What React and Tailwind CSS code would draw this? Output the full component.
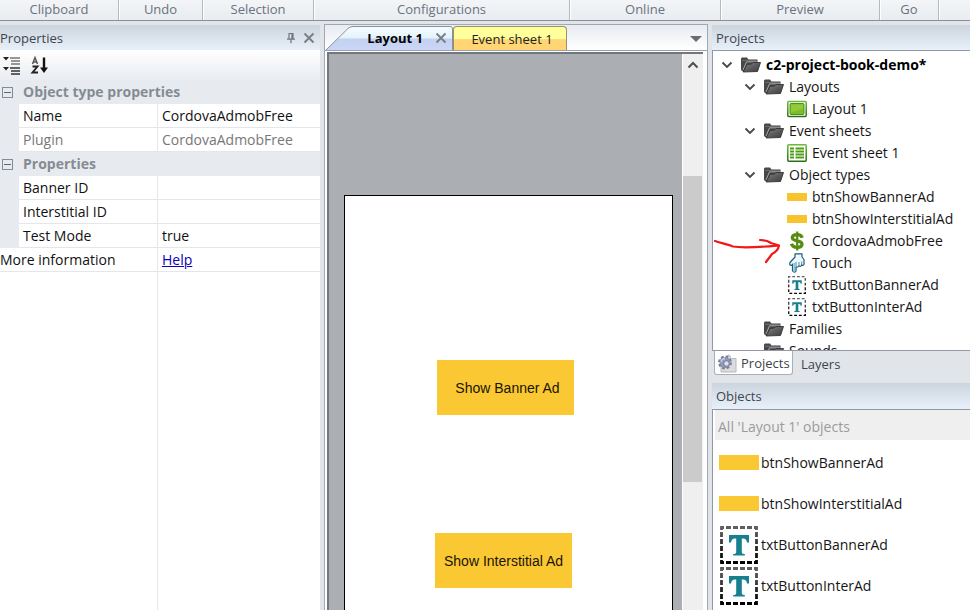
import React from "react";

const ribbonGroups = [
  { label: "Clipboard", width: "w-[119px]" },
  { label: "Undo", width: "w-[84px]" },
  { label: "Selection", width: "w-[111px]" },
  { label: "Configurations", width: "w-[256px]" },
  { label: "Online", width: "w-[151px]" },
  { label: "Preview", width: "w-[159px]" },
  { label: "Go", width: "w-[59px]" },
];

function Ribbon() {
  return (
    <header className="flex h-[21px] shrink-0 border-b border-[#8b9097] bg-linear-to-b from-[#f3f5f7] to-[#e9ecf0] text-[13px] text-[#6a7280]">
      {ribbonGroups.map((g) => (
        <div key={g.label} className={`${g.width} h-5 shrink-0 border-r border-[#b4b9c1] text-center leading-[18px] shadow-[1px_0_0_#ffffff]`}>
          {g.label}
        </div>
      ))}
    </header>
  );
}

function PanelTitle({ children, className }) {
  return (
    <div className={`flex shrink-0 items-center bg-linear-to-b from-[#ccd4dd] to-[#e8f0f9] text-[13px] text-[#3f4650] ${className}`}>
      {children}
    </div>
  );
}

function PinIcon() {
  return (
    <svg className="h-3 w-3" viewBox="0 0 12 12" fill="none" stroke="#6f757d" strokeWidth="1.2">
      <path d="M3.5 1.5h5M4 1.5v5.5M8 1.5v5.5M7 2v5M2 7.2h8M6 7.2v4" />
    </svg>
  );
}

function CloseIcon() {
  return (
    <svg className="h-3 w-3" viewBox="0 0 12 12" fill="none" stroke="#7a7f86" strokeWidth="1.9">
      <path d="M1.5 1.5l9 9M10.5 1.5l-9 9" />
    </svg>
  );
}

function CategorizedIcon() {
  return (
    <svg className="h-5 w-5" viewBox="0 0 20 20">
      <path d="M1 2h6L4 5.5zM1 12h6l-3 3.5z" fill="#222" />
      <path d="M8 3h10M9 6h9M9 9h9" stroke="#777" strokeWidth="1.5" />
      <path d="M8 13h10M9 16h9M9 19h9" stroke="#333" strokeWidth="1.7" />
    </svg>
  );
}

function SortIcon() {
  return (
    <svg className="h-5 w-5" viewBox="0 0 20 20" fill="none">
      <path d="M2.500 9L5 2.500 7.500 9M3.200 7h3.600" stroke="#555" strokeWidth="1.500" />
      <path d="M2.500 11.500h5l-5 6h5.500" stroke="#222" strokeWidth="1.900" />
      <path d="M14 2.500v11.500" stroke="#111" strokeWidth="2.400" />
      <path d="M10 12.500h8L14 18z" fill="#111" />
    </svg>
  );
}

function CategoryRow({ children }) {
  return (
    <tr className="h-6 bg-[#e7ebef]">
      <td className="p-0 pl-[2px]">
        <button aria-label={`Collapse ${children}`} className="flex h-[11px] w-[11px] items-center justify-center border border-[#868c95]">
          <span className="h-px w-[7px] bg-[#60666e]" />
        </button>
      </td>
      <th colSpan={2} className="p-0 pl-1 text-left font-bold text-[#868b93]">{children}</th>
    </tr>
  );
}

function PropertyRow({ id, label, children, muted }) {
  return (
    <tr className={muted ? "h-6 text-[#777777]" : "h-6 text-[#111111]"}>
      <td className="bg-[#e7ebef] p-0" />
      <td className="border-r border-b border-[#e3e6eb] p-0 pl-1">
        <label htmlFor={id}>{label}</label>
      </td>
      <td className="border-b border-[#e3e6eb] p-0 pl-1">{children}</td>
    </tr>
  );
}

function PropertiesPanel() {
  const field = "block h-[23px] w-full appearance-none bg-transparent p-0 outline-none";
  return (
    <section className="flex w-80 shrink-0 flex-col bg-white">
      <PanelTitle className="h-[25px]">
        <h2 className="flex-1">Properties</h2>
        <button aria-label="Pin" className="mr-[6px]"><PinIcon /></button>
        <button aria-label="Close" className="mr-[5px]"><CloseIcon /></button>
      </PanelTitle>
      <div className="flex h-[30px] shrink-0 items-center gap-2 bg-linear-to-b from-white to-[#e9ecf1] pl-[2px]">
        <button aria-label="Categorized"><CategorizedIcon /></button>
        <button aria-label="Sort alphabetically"><SortIcon /></button>
      </div>
      <table className="w-full table-fixed border-separate border-spacing-0">
        <colgroup>
          <col className="w-[19px]" />
          <col className="w-[139px]" />
          <col />
        </colgroup>
        <tbody>
          <CategoryRow>Object type properties</CategoryRow>
          <PropertyRow id="name" label="Name">
            <input id="name" className={field} defaultValue="CordovaAdmobFree" />
          </PropertyRow>
          <PropertyRow id="plugin" label="Plugin" muted>
            <input id="plugin" className={field} readOnly value="CordovaAdmobFree" />
          </PropertyRow>
          <CategoryRow>Properties</CategoryRow>
          <PropertyRow id="banner" label="Banner ID">
            <input id="banner" className={field} />
          </PropertyRow>
          <PropertyRow id="interstitial" label="Interstitial ID">
            <input id="interstitial" className={field} />
          </PropertyRow>
          <PropertyRow id="test" label="Test Mode">
            <select id="test" className={field} defaultValue="true">
              <option>true</option>
              <option>false</option>
            </select>
          </PropertyRow>
          <tr className="h-6 text-[#111111]">
            <td colSpan={2} className="border-r border-b border-[#e3e6eb] p-0">More information</td>
            <td className="border-b border-[#e3e6eb] p-0 pl-1">
              <a href="#help" className="text-[#0d00b8] underline">Help</a>
            </td>
          </tr>
        </tbody>
      </table>
      <div className="w-[158px] flex-1 border-r border-[#e3e6eb]" />
    </section>
  );
}

function EditorTabs() {
  return (
    <div className="flex h-[26px] shrink-0 items-end border-b border-[#9ba1ab] bg-linear-to-b from-[#e8ebf0] to-white text-[13px]">
      <div className="relative h-6 w-32 shrink-0">
        <svg className="absolute inset-0 h-6 w-32" viewBox="0 0 128 24">
          <defs>
            <linearGradient id="tabFill" x1="0" y1="0" x2="0" y2="1">
              <stop offset="0" stopColor="#f6fcff" />
              <stop offset="0.5" stopColor="#e3f2fa" />
              <stop offset="0.52" stopColor="#c3d1f1" />
              <stop offset="1" stopColor="#cbd6f5" />
            </linearGradient>
          </defs>
          <path d="M1 24L23 2.500Q25 .5 28 .5H125.500Q127.500 .5 127.500 3V24" fill="url(#tabFill)" stroke="#8990a0" />
        </svg>
        <div className="relative flex h-6 items-center justify-end pr-[6px]">
          <button className="mr-3 font-bold text-black">Layout 1</button>
          <button aria-label="Close Layout 1"><CloseIcon /></button>
        </div>
      </div>
      <button className="h-6 w-[114px] shrink-0 rounded-t-[4px] border border-b-0 border-[#99916e] bg-linear-to-b from-[#ffff9c] from-50% to-[#ffd673] to-55% pl-1 text-[#222222]">
        Event sheet 1
      </button>
      <button aria-label="Open tab list" className="mr-[5px] mb-2 ml-auto">
        <svg className="h-[6px] w-3" viewBox="0 0 12 6"><path d="M0 0h12L6 6z" fill="#686d75" /></svg>
      </button>
    </div>
  );
}

function LayoutEditor() {
  const sprite = "absolute flex h-[55px] w-[137px] items-center justify-center bg-[#fac832] font-[Liberation_Sans,Arial,sans-serif] text-sm text-[#1a1406]";
  return (
    <main className="mt-[3px] flex min-w-0 flex-1 flex-col border border-b-0 border-[#a0a8b5] bg-white">
      <EditorTabs />
      <div className="mt-px mr-1 ml-[2px] flex min-h-0 flex-1 border-t-2 border-l-2 border-[#73777d]">
        <div className="flex min-w-0 flex-1 overflow-hidden bg-[#abaeb3] pt-[141px] pr-[9px] pl-[15px]">
          <div className="relative flex-1 border border-b-0 border-black bg-white">
            <div className={`${sprite} top-[164px] left-[92px] pl-1`}>Show Banner Ad</div>
            <div className={`${sprite} top-[337px] left-[90px]`}>Show Interstitial Ad</div>
          </div>
        </div>
        <div className="flex w-[21px] shrink-0 flex-col border-l border-white bg-[#efefef]">
          <button aria-label="Scroll up" className="flex h-[22px] items-center justify-center">
            <svg className="h-2 w-3" viewBox="0 0 12 8" fill="none" stroke="#4b4f54" strokeWidth="2"><path d="M1.500 6.500L6 2l4.500 4.500" /></svg>
          </button>
          <div className="mt-[100px] mr-px h-[306px] bg-[#cbcbcb]" />
        </div>
      </div>
    </main>
  );
}

function FolderIcon() {
  return (
    <svg className="h-4 w-5 shrink-0" viewBox="0 0 20 16">
      <defs>
        <linearGradient id="folderFront" x1="0" y1="0" x2="1" y2="1">
          <stop offset="0" stopColor="#8a8a8a" />
          <stop offset="0.5" stopColor="#5c5c5c" />
          <stop offset="1" stopColor="#3c3c3c" />
        </linearGradient>
      </defs>
      <path d="M0 1.500L1 .5H6L7.500 2.500H16.500V8L2.500 15L0 13z" fill="#484646" />
      <path d="M1 3.300H15.500" stroke="#807d7d" strokeWidth=".8" />
      <path d="M2 13L5.500 4.800H16" fill="none" stroke="#b5b5b5" strokeWidth=".9" />
      <path d="M2.200 15L6 7.500 10.500 7 12 5.500H19.500L16.500 14.500z" fill="url(#folderFront)" stroke="#353434" strokeWidth=".9" />
    </svg>
  );
}

function LayoutIcon() {
  return (
    <svg className="h-[18px] w-5 shrink-0" viewBox="0 0 20 18">
      <defs>
        <linearGradient id="greenFrame" x1="0" y1="0" x2="0" y2="1">
          <stop offset="0" stopColor="#6db83a" />
          <stop offset="1" stopColor="#2c6d18" />
        </linearGradient>
      </defs>
      <rect x=".8" y="1.500" width="18.400" height="15" rx="1" fill="#fff" stroke="url(#greenFrame)" strokeWidth="1.500" />
      <rect x="3" y="3.500" width="14" height="11" rx="1" fill="#7cbd2a" stroke="#4d9413" />
      <path d="M4 12.500V4.500h12v4z" fill="#94c93a" />
    </svg>
  );
}

function EventSheetIcon() {
  return (
    <svg className="h-[18px] w-5 shrink-0" viewBox="0 0 20 18">
      <rect x=".8" y=".8" width="18.400" height="16.400" rx="1" fill="#fff" stroke="url(#greenFrame)" strokeWidth="1.500" />
      <path d="M3 4.500h4M8.500 4.500H17M3 7.500h4M8.500 7.500H17M3 10.500h4M8.500 10.500H17M3 13.500h4M8.500 13.500H17" stroke="#4d9d12" strokeWidth="2.200" />
    </svg>
  );
}

function SpriteIcon() {
  return <span className="flex h-4 w-5 shrink-0 items-center"><span className="h-2 w-full bg-[#f7c42e]" /></span>;
}

function DollarIcon() {
  return (
    <svg className="h-5 w-5 shrink-0" viewBox="0 0 20 20" fill="none" stroke="#568c12">
      <path d="M15.300 6.800C14.500 4.500 12.500 3.600 10.200 3.600 7.200 3.600 5.300 4.900 5.300 6.800 5.300 11 15 8.500 15 13c0 2.200-2 3.300-4.800 3.300-2.800 0-5-1-5.700-3.600" strokeWidth="3.300" />
      <path d="M10.200 .5v19" strokeWidth="2.200" />
    </svg>
  );
}

function TouchIcon() {
  return (
    <svg className="h-5 w-5 shrink-0" viewBox="0 0 20 20" fill="#eef8fc" stroke="#1d5e7c" strokeWidth="1.200" strokeLinejoin="round">
      <path d="M8 .8L15 .8 15 4 17 6.500V11.500q-1 1.500-2.300 .5-1 2-2.700 1-1 1.500-3 1V18q-1.500 2.500-3.500 0V11L4.500 12.500Q2 12.500 3 9.500L8 4z" />
      <path d="M9 9v4.500M12 9v4M14.700 8.500V12" fill="none" strokeWidth=".7" />
      <path d="M7.200 10v8" fill="none" stroke="#58bbdc" />
    </svg>
  );
}

function TextIcon({ className, dash }) {
  return (
    <svg className={`${className} shrink-0`} viewBox="0 0 38 38">
      <defs>
        <linearGradient id="dashFill" x1="0" y1="0" x2="0" y2="1">
          <stop offset="0" stopColor="#606060" />
          <stop offset="1" stopColor="#000" />
        </linearGradient>
      </defs>
      <rect x="1.500" y="1.500" width="35" height="35" fill="#fff" stroke="url(#dashFill)" strokeWidth="2.800" strokeDasharray={dash} strokeDashoffset="2.500" />
      <path d="M9 9h20v7.500h-2q-.5-4-4-4h-1.200v13.500q0 2 3 2v1.500H13.200V28q3 0 3-2V12.500H15q-3.500 0-4 4H9z" fill="#16808f" />
    </svg>
  );
}

function ProjectsTabIcon() {
  return (
    <svg className="h-5 w-5" viewBox="0 0 20 20">
      <path d="M4 5.500h6q-1-3.500 1.500-3.500T13 5.500h6V19H4z" fill="#dcdcde" stroke="#b8b8bd" />
      <circle cx="8" cy="9.500" r="5.500" fill="#8d93b0" stroke="#7980a0" strokeWidth="3" strokeDasharray="2.500 1.800" />
      <circle cx="8" cy="9.500" r="5" fill="#9299b6" />
      <path d="M4 9q1-3.500 4-3.500" fill="none" stroke="#c8ccdf" strokeWidth="1.500" />
      <circle cx="9.500" cy="10.500" r="2.700" fill="#dfe1ec" stroke="#666c8e" strokeWidth=".8" />
    </svg>
  );
}

const tree = [
  { depth: 0, open: true, icon: <FolderIcon />, label: "c2-project-book-demo*", bold: true },
  { depth: 1, open: true, icon: <FolderIcon />, label: "Layouts" },
  { depth: 2, icon: <LayoutIcon />, label: "Layout 1" },
  { depth: 1, open: true, icon: <FolderIcon />, label: "Event sheets" },
  { depth: 2, icon: <EventSheetIcon />, label: "Event sheet 1" },
  { depth: 1, open: true, icon: <FolderIcon />, label: "Object types" },
  { depth: 2, icon: <SpriteIcon />, label: "btnShowBannerAd" },
  { depth: 2, icon: <SpriteIcon />, label: "btnShowInterstitialAd" },
  { depth: 2, icon: <DollarIcon />, label: "CordovaAdmobFree" },
  { depth: 2, icon: <TouchIcon />, label: "Touch" },
  { depth: 2, icon: <TextIcon className="h-[18px] w-5" dash="6 4" />, label: "txtButtonBannerAd" },
  { depth: 2, icon: <TextIcon className="h-[18px] w-5" dash="6 4" />, label: "txtButtonInterAd" },
  { depth: 1, icon: <FolderIcon />, label: "Families" },
  { depth: 1, icon: <FolderIcon />, label: "Sounds" },
];

const indents = ["pl-2", "pl-[31px]", "pl-[54px]"];

function ProjectTree() {
  return (
    <div className="relative min-h-0 flex-1 overflow-hidden border-y border-l border-[#9299a5] bg-white pt-[3px] text-[#161616]">
      <ul role="tree" aria-label="Projects">
        {tree.map((node) => (
          <li key={node.label} role="treeitem" aria-level={node.depth + 1} className={`${indents[node.depth]} flex h-[22px] items-center whitespace-nowrap`}>
            <span className="flex w-5 shrink-0 items-center">
              {node.open && (
                <button aria-label={`Collapse ${node.label}`}>
                  <svg className="h-2 w-3" viewBox="0 0 12 8" fill="none" stroke="#45484c" strokeWidth="1.800"><path d="M1.500 1.500L6 6l4.500-4.500" /></svg>
                </button>
              )}
            </span>
            {node.icon}
            <span className={node.bold ? "ml-[5px] font-bold text-black" : "ml-[5px]"}>{node.label}</span>
          </li>
        ))}
      </ul>
      <svg className="absolute top-[184px] left-0 h-8 w-[70px]" viewBox="0 0 70 32" fill="none" stroke="#f01818" strokeWidth="2.200" strokeLinecap="round" strokeLinejoin="round">
        <path d="M2 6C8 8 14 9 20 11.500 32 13.500 48 12 65 10.500M47 5Q54 5 58 8L66 10.500Q65 16 59 19L53 27" />
      </svg>
    </div>
  );
}

const objects = [
  { label: "btnShowBannerAd", kind: "sprite" },
  { label: "btnShowInterstitialAd", kind: "sprite" },
  { label: "txtButtonBannerAd", kind: "text" },
  { label: "txtButtonInterAd", kind: "text" },
];

function Sidebar() {
  return (
    <aside className="flex w-[258px] shrink-0 flex-col">
      <PanelTitle className="h-[25px] pl-1"><h2>Projects</h2></PanelTitle>
      <ProjectTree />
      <div className="flex h-8 shrink-0 items-start pl-[2px] text-[13px] text-[#3e444c]">
        <button className="flex h-6 w-[79px] items-center gap-1 rounded-b-[3px] border border-t-0 border-[#a9afb9] bg-white pl-[2px]">
          <ProjectsTabIcon />
          Projects
        </button>
        <button className="h-[26px] pl-2">Layers</button>
      </div>
      <PanelTitle className="h-[26px] pl-1"><h2>Objects</h2></PanelTitle>
      <div className="h-[201px] shrink-0 overflow-hidden border-t border-l border-[#9299a5] bg-white pl-[2px] text-[#161616]">
        <h3 className="h-[30px] bg-[#efefef] pl-[3px] leading-[34px] text-[#9b9b9b]">All 'Layout 1' objects</h3>
        <ul className="pt-[2px]">
          {objects.map((o) => (
            <li key={o.label} className="flex h-[41px] items-center gap-[2px] pl-1">
              {o.kind === "sprite" ? (
                <span className="h-[15px] w-10 shrink-0 bg-[#fac832]" />
              ) : (
                <TextIcon className="h-[38px] w-10" dash="5 2" />
              )}
              {o.label}
            </li>
          ))}
        </ul>
      </div>
    </aside>
  );
}

export default function App() {
  return (
    <div className="flex h-screen flex-col overflow-hidden bg-[#e1e5ea] font-[Open_Sans,Noto_Sans,sans-serif] text-sm leading-5">
      <Ribbon />
      <div className="flex min-h-0 flex-1">
        <div className="flex shrink-0 pt-1"><PropertiesPanel /></div>
        <div className="w-1 shrink-0" />
        <LayoutEditor />
        <div className="w-1 shrink-0" />
        <div className="flex shrink-0 pt-1"><Sidebar /></div>
      </div>
    </div>
  );
}
